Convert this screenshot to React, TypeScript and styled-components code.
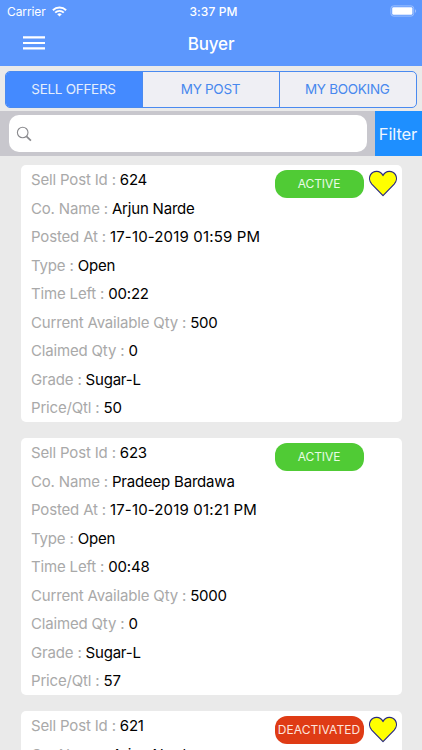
import React from "react";
import styled, { createGlobalStyle } from "styled-components";

const GlobalStyle = createGlobalStyle`
  * { box-sizing: border-box; }
  body { margin: 0; overflow: hidden; background: #eaeaea; }
  button, input { font-family: inherit; }
`;

const Screen = styled.div`
  width: 422px;
  height: 750px;
  overflow: hidden;
  display: flex;
  flex-direction: column;
  background: #eaeaea;
  font-family: Inter, "Liberation Sans", sans-serif;
`;

const Header = styled.header`
  flex: none;
  height: 65.5px;
  background: #5c97fd;
  color: #fff;
`;

const StatusBar = styled.div`
  height: 22px;
  padding: 0 5px 0 7px;
  display: grid;
  grid-template-columns: 1fr auto 1fr;
  align-items: center;
  font-size: 12px;
`;

const Carrier = styled.div`
  display: flex;
  align-items: center;
  gap: 6px;
  letter-spacing: -0.1px;
`;

const Clock = styled.div`
  font-weight: 500;
  letter-spacing: 0.1px;
  padding-left: 3px;
`;

const BatterySlot = styled.div`
  display: flex;
  justify-content: flex-end;
`;

const NavBar = styled.div`
  height: 43px;
  display: grid;
  grid-template-columns: 60px 1fr 60px;
  align-items: center;
`;

const MenuButton = styled.button`
  width: 22px;
  height: 14px;
  margin: -1px 0 0 22.5px;
  padding: 0;
  border: 0;
  background: none;
`;

const Title = styled.h1`
  margin: 0;
  text-align: center;
  font-size: 17px;
  font-weight: 500;
  letter-spacing: -0.15px;
`;

const Tabs = styled.nav`
  flex: none;
  width: 411.5px;
  height: 37px;
  margin: 5px 0 3.5px 5px;
  display: grid;
  grid-template-columns: 136px 137px 1fr;
  border: 1px solid #4a8af0;
  border-radius: 5px;
  overflow: hidden;
  background: #efeff4;
`;

const Tab = styled.button<{ $active?: boolean }>`
  border: 0;
  padding: 0 1px 0 0;
  border-left: ${(p) => (p.$active ? "0" : "1px solid #4a8af0")};
  background: ${(p) => (p.$active ? "#448aff" : "transparent")};
  color: ${(p) => (p.$active ? "#e4eefc" : "#4788ee")};
  font-size: 13.5px;
  letter-spacing: -0.3px;
`;

const SearchBar = styled.div`
  flex: none;
  height: 45px;
  display: flex;
  background: #c8c7cd;
`;

const SearchField = styled.label`
  width: 358.5px;
  height: 37px;
  margin: 4px 8px 4px 8.5px;
  padding: 0 7px;
  display: flex;
  align-items: center;
  gap: 8px;
  border-radius: 10px;
  background: #fff;
`;

const SearchInput = styled.input`
  flex: 1;
  border: 0;
  outline: 0;
  background: none;
  font-size: 15px;
`;

const FilterButton = styled.button`
  flex: 1;
  border: 0;
  padding: 0 1px 0 0;
  background: #1e8fff;
  color: #eef6ff;
  font-size: 16.5px;
  letter-spacing: -0.1px;
`;

const Offers = styled.main`
  padding: 9px 20.5px 0 21px;
  display: flex;
  flex-direction: column;
  gap: 16.5px;
`;

const Card = styled.article`
  height: 256.5px;
  flex: none;
  display: flex;
  justify-content: space-between;
  padding: 0 5px 0 10px;
  border-radius: 5px;
  background: #fff;
`;

const Details = styled.dl`
  margin: 0.5px 0 0;
`;

const Row = styled.div`
  height: 28.5px;
  display: flex;
  align-items: center;
  gap: 4px;
  white-space: nowrap;
  font-size: 15px;
`;

const Label = styled.dt`
  color: #a9a9a9;
  letter-spacing: -0.17px;
`;

const Value = styled.dd<{ $wide?: boolean }>`
  margin: 0;
  color: #000;
  letter-spacing: ${(p) => (p.$wide ? "0.15px" : "-0.2px")};
`;

const Actions = styled.div`
  width: 122px;
  height: 38px;
  padding-top: 5px;
  display: flex;
  gap: 5px;
`;

const Status = styled.span<{ $off?: boolean }>`
  width: 89px;
  height: 28px;
  padding-bottom: 1px;
  display: flex;
  align-items: center;
  justify-content: center;
  border-radius: 12px;
  background: ${(p) => (p.$off ? "#df3b15" : "#50cb35")};
  color: ${(p) => (p.$off ? "#fde3dc" : "#e9fbe5")};
  font-size: 12px;
  letter-spacing: ${(p) => (p.$off ? "0.05px" : "-0.1px")};
`;

const WifiIcon = () => (
  <svg width="15" height="11" viewBox="0 0 15 11" fill="none" stroke="#fff" strokeWidth="1.9">
    <path d="M.9 4.2a9.4 9.4 0 0 1 13.2 0" />
    <path d="M3.2 6.6a6.1 6.1 0 0 1 8.6 0" />
    <path d="M7.5 10.6 5.2 8.3a3.3 3.3 0 0 1 4.6 0z" fill="#fff" stroke="none" />
  </svg>
);

const BatteryIcon = () => (
  <svg width="27" height="12" viewBox="0 0 27 12">
    <rect x=".9" y=".9" width="22.8" height="10.2" rx="2.6" fill="none" stroke="#9dc0fe" />
    <rect x="2.2" y="2.2" width="20.2" height="7.6" rx="1.3" fill="#fff" />
    <path d="M25 4.2c1.5.5 1.5 3.1 0 3.6z" fill="#9dc0fe" />
  </svg>
);

const MenuIcon = () => (
  <svg width="22" height="14" viewBox="0 0 22 14" display="block" stroke="#fff" strokeWidth="2.2">
    <path d="M0 1.4h22M0 7h22M0 12.4h22" />
  </svg>
);

const SearchIcon = () => (
  <svg width="16" height="16" viewBox="0 0 16 16" fill="none" stroke="#8a8a8e">
    <circle cx="6.7" cy="6.5" r="5.3" strokeWidth="1.1" />
    <path d="m10.5 10.3 4.4 4.3" strokeWidth="1.7" />
  </svg>
);

const HeartIcon = () => (
  <svg width="28" height="27" viewBox="0 0 28 27">
    <path
      d="M14 25.6 2.8 14.1C.4 11.5-.1 7.4 1.6 4.6 4.1.5 11.2-.4 14 5.6 16.8-.4 23.9.5 26.4 4.6c1.7 2.8 1.2 6.9-1.2 9.5z"
      fill="#ff0"
      stroke="#2b2b80"
      strokeWidth="1.2"
      strokeLinejoin="round"
    />
  </svg>
);

interface Offer {
  id: string;
  name: string;
  posted?: string;
  left?: string;
  available?: string;
  price?: string;
  active: boolean;
  favourite: boolean;
}

const offers: Offer[] = [
  { id: "624", name: "Arjun Narde", posted: "17-10-2019 01:59 PM", left: "00:22", available: "500", price: "50", active: true, favourite: true },
  { id: "623", name: "Pradeep Bardawa", posted: "17-10-2019 01:21 PM", left: "00:48", available: "5000", price: "57", active: true, favourite: false },
  { id: "621", name: "Arjun Narde", active: false, favourite: true },
];

const OfferCard = ({ offer }: { offer: Offer }) => {
  const rows: [string, string | undefined][] = [
    ["Sell Post Id", offer.id],
    ["Co. Name", offer.name],
  ];
  if (offer.posted) {
    rows.push(
      ["Posted At", offer.posted],
      ["Type", "Open"],
      ["Time Left", offer.left],
      ["Current Available Qty", offer.available],
      ["Claimed Qty", "0"],
      ["Grade", "Sugar-L"],
      ["Price/Qtl", offer.price],
    );
  }
  return (
    <Card>
      <Details>
        {rows.map(([label, value]) => (
          <Row key={label}>
            <Label>{label} :</Label>
            <Value $wide={label === "Posted At"}>{value}</Value>
          </Row>
        ))}
      </Details>
      <Actions>
        <Status $off={!offer.active}>{offer.active ? "ACTIVE" : "DEACTIVATED"}</Status>
        {offer.favourite && <HeartIcon />}
      </Actions>
    </Card>
  );
};

export default function App() {
  return (
    <Screen>
      <GlobalStyle />
      <Header>
        <StatusBar>
          <Carrier>
            Carrier
            <WifiIcon />
          </Carrier>
          <Clock>3:37 PM</Clock>
          <BatterySlot>
            <BatteryIcon />
          </BatterySlot>
        </StatusBar>
        <NavBar>
          <MenuButton aria-label="Menu">
            <MenuIcon />
          </MenuButton>
          <Title>Buyer</Title>
        </NavBar>
      </Header>
      <Tabs>
        <Tab $active>SELL OFFERS</Tab>
        <Tab>MY POST</Tab>
        <Tab>MY BOOKING</Tab>
      </Tabs>
      <SearchBar>
        <SearchField>
          <SearchIcon />
          <SearchInput aria-label="Search" />
        </SearchField>
        <FilterButton>Filter</FilterButton>
      </SearchBar>
      <Offers>
        {offers.map((offer) => (
          <OfferCard key={offer.id} offer={offer} />
        ))}
      </Offers>
    </Screen>
  );
}
